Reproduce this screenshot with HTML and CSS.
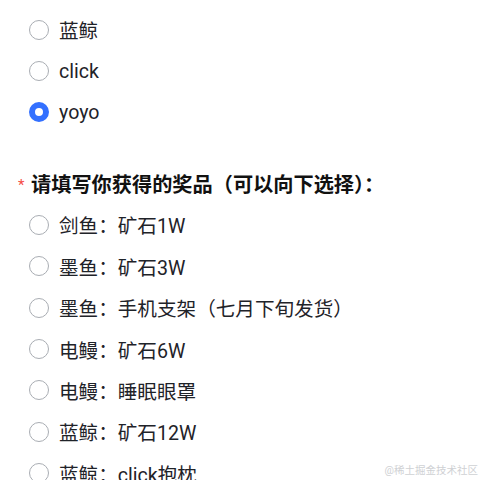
FILE: index.html
```html
<!DOCTYPE html>
<html lang="zh-CN">
<head>
    <meta charset="UTF-8">
    <meta name="viewport" content="width=device-width, initial-scale=1.0">
    <title>问卷</title>
    <link rel="stylesheet" href="styles.css">
</head>
<body>
    <div class="form">
        <div class="options">
            <label class="option"><span class="radio"></span>蓝鲸</label>
            <label class="option"><span class="radio"></span>click</label>
            <label class="option"><span class="radio checked"></span>yoyo</label>
        </div>

        <div class="question">
            <div class="title"><span class="required">*</span>请填写你获得的奖品（可以向下选择）：</div>
            <div class="options">
                <label class="option"><span class="radio"></span>剑鱼：矿石1W</label>
                <label class="option"><span class="radio"></span>墨鱼：矿石3W</label>
                <label class="option"><span class="radio"></span>墨鱼：手机支架（七月下旬发货）</label>
                <label class="option"><span class="radio"></span>电鳗：矿石6W</label>
                <label class="option"><span class="radio"></span>电鳗：睡眠眼罩</label>
                <label class="option"><span class="radio"></span>蓝鲸：矿石12W</label>
                <label class="option"><span class="radio"></span>蓝鲸：click抱枕</label>
            </div>
        </div>
    </div>

    <div class="watermark">@稀土掘金技术社区</div>
</body>
</html>
```

FILE: styles.css
```css
body {
    margin: 0;
    background: #fff;
    font-family: Roboto, "Noto Sans CJK SC", sans-serif;
    color: #1f2329;
    font-size: 19.6px;
    overflow: hidden;
    height: 480px;
    position: relative;
}

.form {
    padding: 9px 0 0 29px;
}

.options {
    display: flex;
    flex-direction: column;
}

.option {
    display: flex;
    align-items: center;
    height: 41.4px;
    gap: 10px;
}

.radio {
    width: 20px;
    height: 20px;
    border: 1px solid #a9adb3;
    border-radius: 50%;
    box-sizing: border-box;
    flex-shrink: 0;
}

.radio.checked {
    border: 6px solid #3370ff;
}

.question {
    margin-top: 29.6px;
}

.title {
    height: 41.4px;
    display: flex;
    align-items: center;
    margin-left: -11px;
    font-size: 20.2px;
    font-weight: bold;
    color: #111;
}

.required {
    color: #f54a45;
    font-size: 15px;
    font-weight: normal;
    width: 13px;
    margin-top: 3px;
}

.watermark {
    position: absolute;
    right: 2px;
    bottom: 3px;
    font-size: 10.5px;
    color: #cfd1d4;
}
```
